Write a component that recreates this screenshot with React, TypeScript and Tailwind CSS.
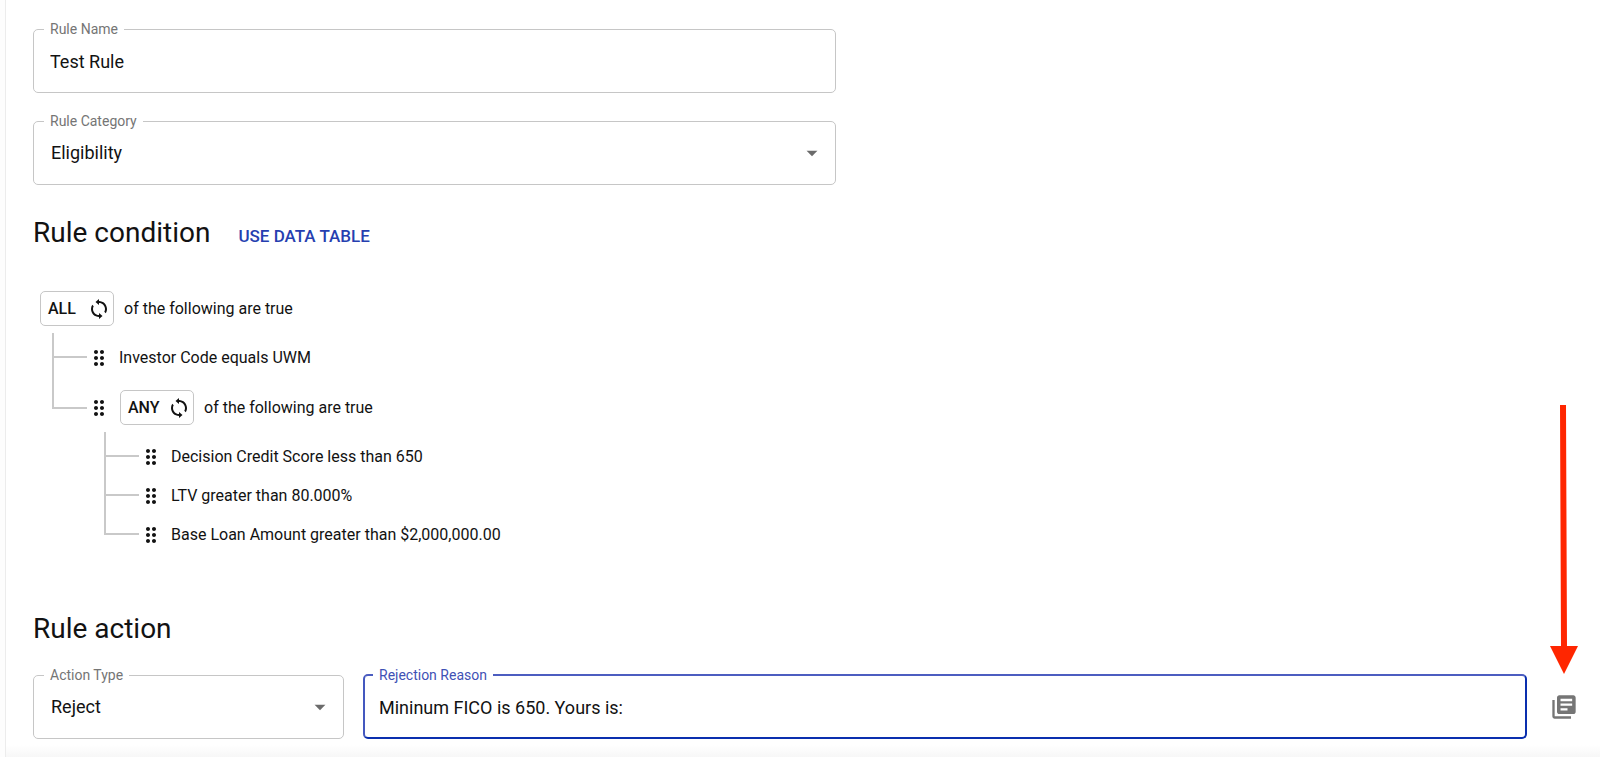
import type { ReactNode } from 'react';
import { MdArrowDropDown, MdDragIndicator, MdLibraryBooks } from 'react-icons/md';

interface Condition {
  text?: string;
  match?: 'ALL' | 'ANY';
  children?: Condition[];
}

const rootCondition: Condition = {
  match: 'ALL',
  children: [
    { text: 'Investor Code equals UWM' },
    {
      match: 'ANY',
      children: [
        { text: 'Decision Credit Score less than 650' },
        { text: 'LTV greater than 80.000%' },
        { text: 'Base Loan Amount greater than $2,000,000.00' },
      ],
    },
  ],
};

interface FieldProps {
  id: string;
  label: string;
  className?: string;
  focused?: boolean;
  children: ReactNode;
}

function Field({ id, label, className = '', focused = false, children }: FieldProps) {
  return (
    <fieldset
      className={`min-w-0 rounded-[5px] ${
        focused
          ? 'border-2 border-t-[#4c5dc0] border-l-[#4458bf] border-r-[#0a2fae] border-b-[#0a2fae]'
          : 'border border-[#c6c6c6]'
      } ${className}`}
    >
      <legend className={`px-1.5 text-sm leading-4 ${focused ? 'ml-2 text-[#3f51b5]' : 'ml-2.5 text-[#757575]'}`}>
        <label htmlFor={id}>{label}</label>
      </legend>
      <div className={`relative ${focused ? 'h-[54px]' : 'h-[55px]'}`}>{children}</div>
    </fieldset>
  );
}

function SelectField({ id, label, value, className }: { id: string; label: string; value: string; className?: string }) {
  return (
    <Field id={id} label={label} className={className}>
      <select id={id} defaultValue={value} className="h-12 w-full appearance-none bg-transparent px-[17px] text-lg outline-none">
        <option value={value}>{value}</option>
      </select>
      <MdArrowDropDown className="pointer-events-none absolute top-[11px] right-2.5 size-[26px] text-[#6b6b6b]" />
    </Field>
  );
}

function ToggleIcon() {
  return (
    <svg className="size-6" viewBox="0 0 24 24" fill="currentColor">
      <path d="M12 4V2L8.5 5l3.5 3V6c3.31 0 6 2.69 6 6 0 1.01-.25 1.97-.7 2.8l1.46 1.46C19.54 15.03 20 13.57 20 12c0-4.42-3.58-8-8-8z" />
      <path d="M12 20v2l3.5-3-3.5-3v2c-3.31 0-6-2.69-6-6 0-1.01.25-1.97.7-2.8L5.24 7.74C4.46 8.97 4 10.43 4 12c0 4.42 3.58 8 8 8z" />
    </svg>
  );
}

function GroupHeader({ match }: { match: string }) {
  return (
    <div className="flex items-center gap-2.5">
      <button type="button" className="flex h-[35px] w-[74px] items-center justify-between rounded-[5px] border border-[#c6c6c6] pr-0.5 pl-[7px] text-base font-medium">
        {match}
        <ToggleIcon />
      </button>
      <span>of the following are true</span>
    </div>
  );
}

function branchHeight(item: Condition, index: number) {
  if (item.children) return 'h-8';
  return index === 0 ? 'h-[25px]' : 'h-5';
}

function ConditionList({ items, className }: { items: Condition[]; className: string }) {
  return (
    <ul className={`mt-[7px] ${className}`}>
      {items.map((item, i) => (
        <li key={i} className="flex">
          {/* Tree branch */}
          <div className="flex w-[35px] flex-col">
            <div className={`border-b-2 border-l-2 border-[#c9c9c9] ${branchHeight(item, i)}`}></div>
            {i < items.length - 1 && <div className="flex-1 border-l-2 border-[#c9c9c9]"></div>}
          </div>

          {item.children ? (
            <div className="pt-[13px]">
              <div className="flex items-center gap-[9px]">
                <MdDragIndicator className="size-6" />
                <GroupHeader match={item.match!} />
              </div>
              <ConditionList items={item.children} className="ml-[17px]" />
            </div>
          ) : (
            <div className={`flex h-[39px] items-center gap-2 ${i === 0 ? 'mt-[5px]' : ''}`}>
              <MdDragIndicator className="size-6" />
              <span>{item.text}</span>
            </div>
          )}
        </li>
      ))}
    </ul>
  );
}

export default function App() {
  return (
    <div className="bg-[#fdfdfd] pl-[5px] font-[Roboto,sans-serif] text-base text-[#121212]">
      <main className="border-l border-[#ececec] bg-white pt-[21px]">
        <div className="pr-[22px] pl-[27px]">
          <div className="flex max-w-[803px] flex-col gap-5">
            <Field id="rule-name" label="Rule Name">
              <input id="rule-name" type="text" defaultValue="Test Rule" className="h-12 w-full bg-transparent px-4 text-lg outline-none" />
            </Field>
            <SelectField id="rule-category" label="Rule Category" value="Eligibility" />
          </div>

          <div className="mt-8 flex items-baseline gap-7">
            <h2 className="text-[28px] leading-8">Rule condition</h2>
            <button type="button" className="text-[17px] leading-6 font-medium text-[#263fb0]">USE DATA TABLE</button>
          </div>

          <section className="mt-[42px] ml-[7px]">
            <GroupHeader match="ALL" />
            <ConditionList items={rootCondition.children!} className="ml-3" />
          </section>

          <h2 className="mt-[59px] text-[28px] leading-8">Rule action</h2>
          <div className="mt-[22px] flex items-start">
            <SelectField id="action-type" label="Action Type" value="Reject" className="w-[311px]" />
            <Field id="rejection-reason" label="Rejection Reason" focused className="ml-[19px] flex-1">
              <input
                id="rejection-reason"
                type="text"
                defaultValue="Mininum FICO is 650. Yours is:"
                className="h-12 w-full bg-transparent px-3.5 text-lg outline-none"
              />
            </Field>
            <div className="relative mt-[26px] ml-[23px]">
              <button type="button" aria-label="Insert data field" className="block text-[#757575]">
                <MdLibraryBooks className="size-7" />
              </button>
              {/* Callout arrow */}
              <svg className="pointer-events-none absolute bottom-[46px] left-0 h-[270px] w-7" viewBox="0 0 28 270" fill="#ff2600">
                <path d="M10 0h6l1 241h11l-14 28L0 241h11z" />
              </svg>
            </div>
          </div>
        </div>
        <div className="mt-1.5 h-3 bg-linear-to-b from-white to-[#f7f7f7]"></div>
      </main>
    </div>
  );
}
